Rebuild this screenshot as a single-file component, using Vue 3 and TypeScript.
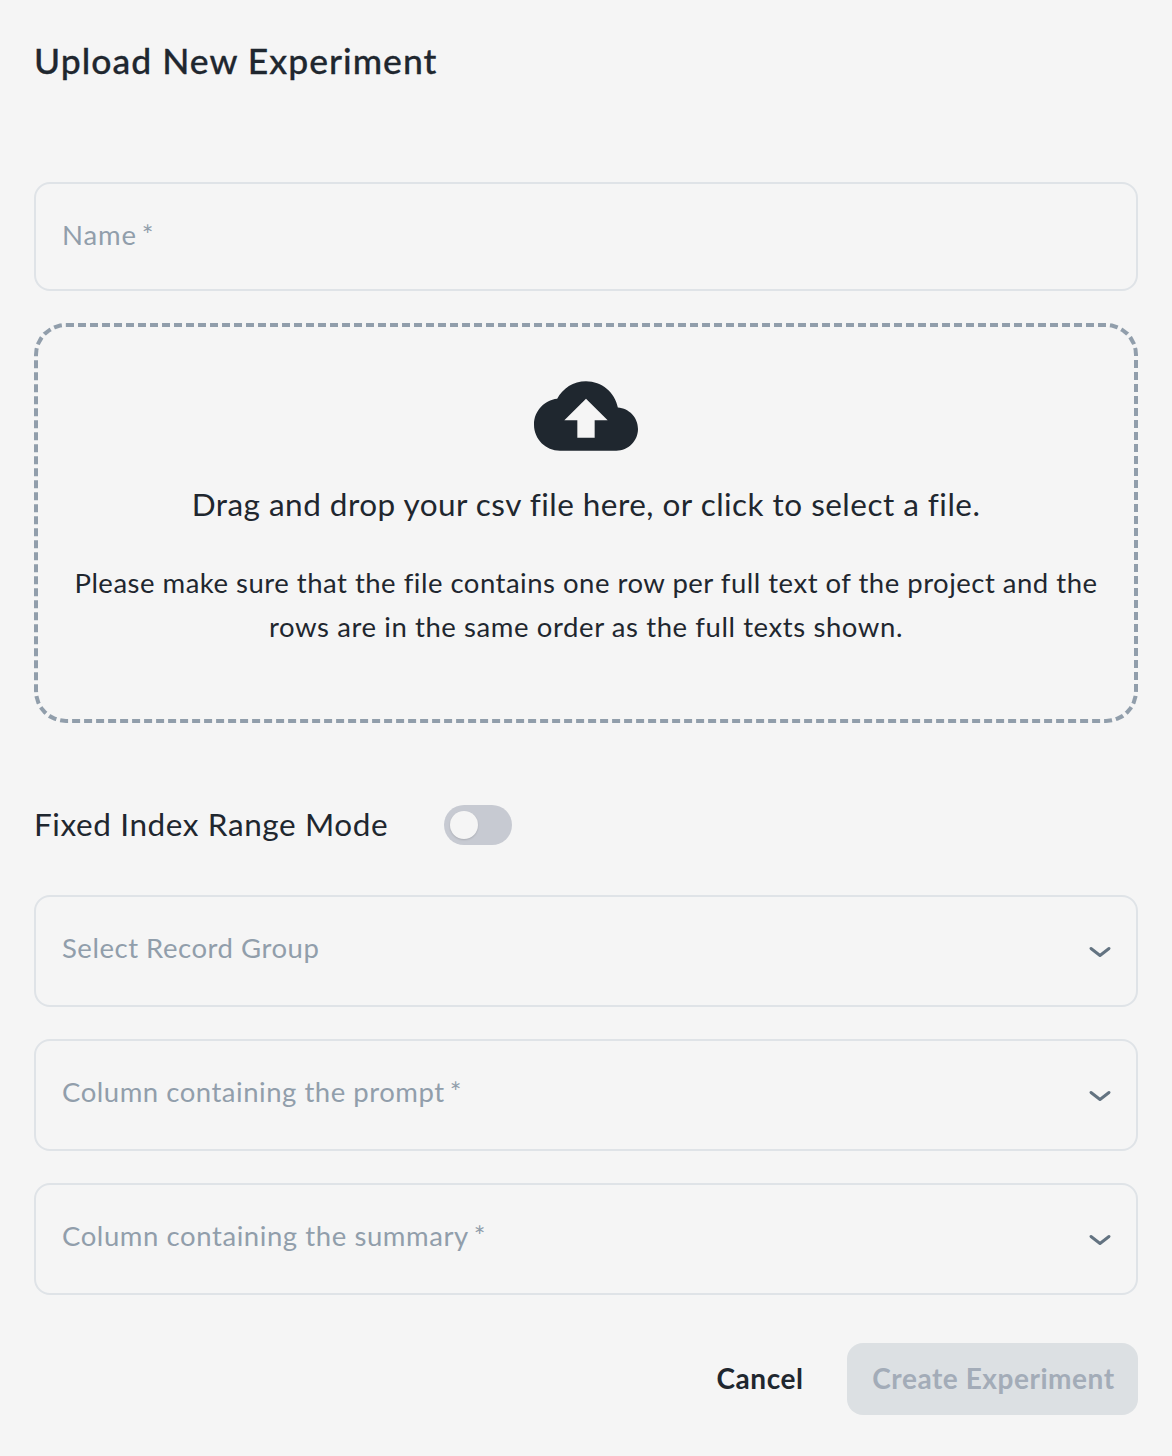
<script setup lang="ts">
import { ref } from 'vue'

interface SelectField {
  id: string
  label: string
  required: boolean
}

const fields: SelectField[] = [
  { id: 'group', label: 'Select Record Group', required: false },
  { id: 'prompt', label: 'Column containing the prompt', required: true },
  { id: 'summary', label: 'Column containing the summary', required: true },
]

const fixedRange = ref(false)
</script>

<template>
  <main class="dialog">
    <h1 class="title">Upload New Experiment</h1>

    <div class="field name-field">
      <span class="label label-name">Name<span class="star">*</span></span>
    </div>

    <section class="dropzone">
      <svg class="cloud" viewBox="0 0 24 24" aria-hidden="true">
        <path d="M19.35 10.04C18.67 6.59 15.64 4 12 4 9.11 4 6.6 5.64 5.35 8.04 2.34 8.36 0 10.91 0 14c0 3.31 2.69 6 6 6h13c2.76 0 5-2.24 5-5 0-2.64-2.05-4.78-4.65-4.96zM14 13v4h-4v-4H7l5-5 5 5h-3z" />
      </svg>
      <p class="lead">Drag and drop your csv file here, or click to select a file.</p>
      <p class="note">
        <span class="line line-first">Please make sure that the file contains one row per full text of the project and the</span>
        <span class="line line-second">rows are in the same order as the full texts shown.</span>
      </p>
    </section>

    <div class="mode-row">
      <span class="mode-label">Fixed Index Range Mode</span>
      <button
        class="switch"
        :class="{ on: fixedRange }"
        type="button"
        role="switch"
        :aria-checked="fixedRange"
        @click="fixedRange = !fixedRange"
      >
        <span class="knob"></span>
      </button>
    </div>

    <div class="selects">
      <div v-for="field in fields" :key="field.id" class="field select-field">
        <span class="label" :class="'label-' + field.id">{{ field.label }}<span v-if="field.required" class="star">*</span></span>
        <svg class="chevron" viewBox="0 0 24 14" aria-hidden="true">
          <path d="M3 2.5L12 9.5L21 2.5" />
        </svg>
      </div>
    </div>

    <footer class="actions">
      <button class="cancel" type="button">Cancel</button>
      <button class="create" type="button" disabled>Create Experiment</button>
    </footer>
  </main>
</template>

<style>
body {
  background: #f5f5f5;
}
</style>

<style scoped>
.dialog {
  box-sizing: border-box;
  width: 100%;
  height: 1456px;
  padding: 33px 34px 34px;
  display: flex;
  flex-direction: column;
  background: #f5f5f5;
  color: #1f272f;
  font-family: Lato, "Open Sans", sans-serif;
  white-space: nowrap;
}
.title {
  margin: 0 0 93px;
  height: 56px;
  line-height: 56px;
  font-size: 35.5px;
  font-weight: 500;
  letter-spacing: 1.03px;
  -webkit-text-stroke: 0.3px #1f272f;
}
.field {
  box-sizing: border-box;
  display: flex;
  align-items: center;
  justify-content: space-between;
  padding: 0 24px 0 26px;
  border: 2px solid #dfe3e7;
  border-radius: 16px;
  color: #919eab;
}
.name-field {
  height: 109px;
}
.select-field {
  height: 112px;
}
.label {
  font-size: 27.5px;
  line-height: 40px;
  letter-spacing: 0.53px;
  padding-bottom: 4px;
}
.label-name {
  letter-spacing: 0.85px;
}
.label-summary {
  letter-spacing: 0.58px;
}
.select-field .label {
  padding-bottom: 7px;
}
.star {
  margin-left: 5px;
}
.dropzone {
  box-sizing: border-box;
  height: 400px;
  margin-top: 32px;
  padding-top: 37px;
  border: 4px dashed #919eab;
  border-radius: 32px;
  display: flex;
  flex-direction: column;
  align-items: center;
}
.cloud {
  width: 104px;
  height: 104px;
  fill: #1f272f;
}
.lead {
  margin: 12px 0 0;
  font-size: 31.5px;
  line-height: 48px;
  letter-spacing: 0.47px;
}
.note {
  margin: 33px 0 0;
  display: flex;
  flex-direction: column;
  align-items: center;
  font-size: 27.5px;
  line-height: 44px;
  letter-spacing: 0.5px;
}
.line-second {
  letter-spacing: 0.59px;
}
.mode-row {
  display: flex;
  align-items: center;
  gap: 56px;
  height: 48px;
  margin: 78px 0 46px;
}
.mode-label {
  width: 354px;
  padding-bottom: 3px;
  font-size: 31.5px;
  letter-spacing: 0.6px;
}
.switch {
  box-sizing: border-box;
  width: 68px;
  height: 40px;
  padding: 6px;
  border: 0;
  border-radius: 20px;
  background: #c7cad2;
  display: flex;
}
.switch.on {
  justify-content: flex-end;
}
.knob {
  width: 28px;
  height: 28px;
  border-radius: 50%;
  background: #f5f5f5;
  box-shadow: 0 1px 2px rgba(0, 0, 0, 0.14);
}
.selects {
  display: flex;
  flex-direction: column;
  gap: 32px;
}
.chevron {
  width: 24px;
  height: 14px;
  margin-top: 3px;
  fill: none;
  stroke: #637381;
  stroke-width: 3;
  stroke-linecap: round;
  stroke-linejoin: round;
}
.actions {
  display: flex;
  justify-content: flex-end;
  gap: 20px;
  margin-top: 48px;
}
.actions button {
  height: 72px;
  padding: 0 0 2px 2px;
  border: 0;
  border-radius: 16px;
  font: 700 28px/70px Lato, "Open Sans", sans-serif;
  letter-spacing: 0.55px;
}
.cancel {
  width: 136px;
  background: transparent;
  color: #1f272f;
}
.create {
  width: 291px;
  background: #dce0e3;
  color: #a3acb8;
}
</style>
